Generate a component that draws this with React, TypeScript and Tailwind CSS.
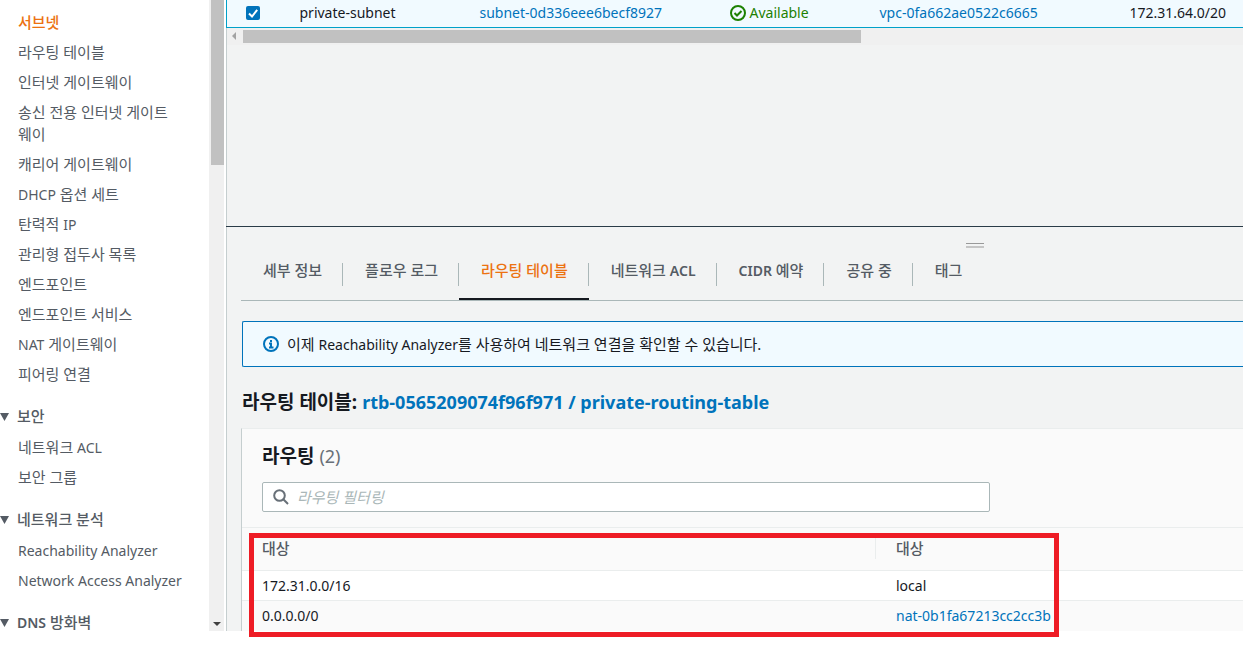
import { useState } from "react";
import clsx from "clsx";

const navGroups = [
  {
    title: "",
    items: [
      "서브넷",
      "라우팅 테이블",
      "인터넷 게이트웨이",
      "송신 전용 인터넷 게이트웨이",
      "캐리어 게이트웨이",
      "DHCP 옵션 세트",
      "탄력적 IP",
      "관리형 접두사 목록",
      "엔드포인트",
      "엔드포인트 서비스",
      "NAT 게이트웨이",
      "피어링 연결",
    ],
  },
  { title: "보안", items: ["네트워크 ACL", "보안 그룹"] },
  { title: "네트워크 분석", items: ["Reachability Analyzer", "Network Access Analyzer"] },
  { title: "DNS 방화벽", items: [] },
];

const tabs = ["세부 정보", "플로우 로그", "라우팅 테이블", "네트워크 ACL", "CIDR 예약", "공유 중", "태그"];

const routes = [
  { destination: "172.31.0.0/16", target: "local", link: false },
  { destination: "0.0.0.0/0", target: "nat-0b1fa67213cc2cc3b", link: true },
];

// Latin runs are set a little smaller than the Hangul around them
function Mixed({ text, bold = false }: { text: string; bold?: boolean }) {
  return (
    <>
      {text.split(/([A-Za-z]+(?: [A-Za-z]+)*)/).map((part, i) =>
        i % 2 ? (
          <span key={i} className={clsx("text-[14px] leading-none whitespace-nowrap", bold && "font-semibold")}>
            {part}
          </span>
        ) : (
          part
        )
      )}
    </>
  );
}

function Sidebar() {
  return (
    <aside className="flex w-[226px] shrink-0 overflow-hidden bg-white text-[#545b64]">
      <nav className="min-w-0 flex-1 pt-[11px] text-[15px] leading-[22px]">
        {navGroups.map((group, g) => (
          <section key={g} className={clsx(g > 0 && "mt-5")}>
            {group.title && (
              <button className="mb-[9px] flex items-center font-medium">
                <svg viewBox="0 0 17 10" className="h-[10px] w-[17px]" fill="currentColor">
                  <path d="M0 2h9L4.500 10z" />
                </svg>
                <span>
                  <Mixed text={group.title} bold />
                </span>
              </button>
            )}
            <ul className="space-y-2 pr-8 pl-[18px]">
              {group.items.map((item) => (
                <li key={item}>
                  <a
                    href="#"
                    className={clsx("block break-all", item === "서브넷" && "font-medium text-[#ec7211]")}
                  >
                    <Mixed text={item} />
                  </a>
                </li>
              ))}
            </ul>
          </section>
        ))}
      </nav>
      {/* Scrollbar */}
      <div className="mr-[2px] flex w-[15px] shrink-0 flex-col items-end justify-between bg-[#f0f0f0]">
        <div className="h-[165px] w-[13px] bg-[#c1c1c1]" />
        <svg viewBox="0 0 15 15" className="size-[15px]" fill="#404040">
          <path d="M4 6h8L8 10z" />
        </svg>
      </div>
    </aside>
  );
}

function SubnetList() {
  return (
    <div className="flex h-[226px] flex-col overflow-hidden">
      <table className="w-full min-w-[1017px] table-fixed border-b border-l border-[#00a1c9] bg-[#f1faff] text-left">
        <tbody>
          <tr className="h-[27px] leading-[26px] whitespace-nowrap">
            <td className="w-[73px] pl-[19px]">
              <label className="flex size-[14px] cursor-pointer">
                <input type="checkbox" defaultChecked aria-label="private-subnet" className="peer sr-only" />
                <svg viewBox="0 0 14 14" className="size-[14px] rounded-[2px] bg-[#0073bb]">
                  <path d="M3 7.500l3 3L11.200 3.800" fill="none" stroke="#fff" strokeWidth="2" />
                </svg>
              </label>
            </td>
            <td className="w-[180px]">private-subnet</td>
            <td className="w-[250px]">
              <a href="#" className="text-[#0073bb]">subnet-0d336eee6becf8927</a>
            </td>
            <td className="w-[150px]">
              <span className="flex items-center gap-1 text-[#1d8102]">
                <svg viewBox="0 0 16 16" className="size-4" fill="none" stroke="currentColor" strokeWidth="2">
                  <circle cx="8" cy="8" r="7" />
                  <path d="M4.500 8l2.500 2.500L11.500 6" />
                </svg>
                Available
              </span>
            </td>
            <td className="w-[250px]">
              <a href="#" className="text-[#0073bb]">vpc-0fa662ae0522c6665</a>
            </td>
            <td>172.31.64.0/20</td>
          </tr>
        </tbody>
      </table>
      <div className="flex-1 border-l border-[#c5cecf]">
        <div className="flex h-[17px] items-center bg-[#f0f0f0]">
          <svg viewBox="0 0 16 16" className="size-4" fill="#a3a3a3">
            <path d="M9 4v8L5 8z" />
          </svg>
          <div className="h-[13px] w-[618px] bg-[#c1c1c1]" />
        </div>
      </div>
    </div>
  );
}

function Tabs() {
  const [active, setActive] = useState("라우팅 테이블");

  return (
    <div role="tablist" className="flex border-b border-[#aab7b8] text-[15px] leading-[22px] font-medium">
      {tabs.map((tab, i) => (
        <button
          key={tab}
          role="tab"
          aria-selected={tab === active}
          onClick={() => setActive(tab)}
          className={clsx(
            "relative pt-[5px] pr-[21px] pb-[19px] pl-[22px] whitespace-nowrap",
            tab === active ? "text-[#ec7211]" : "text-[#545b64]"
          )}
        >
          <Mixed text={tab} bold />
          {i < tabs.length - 1 && <span className="absolute top-[9px] right-0 h-[23px] w-px bg-[#aab7b8]" />}
          {tab === active && <span className="absolute right-0 bottom-0 left-0 h-[2px] bg-[#16191f]" />}
        </button>
      ))}
    </div>
  );
}

function RoutesPanel() {
  return (
    <section className="border-t border-l border-t-[#eaeded] border-l-[#c5cecf] bg-[#fafafa]">
      <div className="px-5 pt-4 pb-[15px]">
        <h2 className="text-[19px] leading-[22px] font-bold">
          라우팅 <span className="text-[18px] leading-none font-normal text-[#687078]">(2)</span>
        </h2>
        <label className="mt-[15px] flex h-[30px] w-[728px] max-w-full items-center rounded-[2px] border border-[#aab7b8] bg-white pl-[10px]">
          <svg viewBox="0 0 16 16" className="size-4 shrink-0" fill="none" stroke="#687078" strokeWidth="2">
            <circle cx="6.500" cy="6.500" r="5.300" />
            <path d="M10.300 10.300L15 15" />
          </svg>
          <input
            type="text"
            aria-label="라우팅 필터링"
            placeholder="라우팅 필터링"
            className="ml-2 w-full bg-transparent text-[15px] italic outline-none placeholder:text-[#aab7b8]"
          />
        </label>
      </div>
      <table className="w-full table-fixed text-left">
        <thead>
          <tr className="h-[43px] border-t border-[#eaeded] align-top text-[15px] leading-[22px] text-[#545b64]">
            <th className="w-[634px] p-0 pt-[9px] font-medium">
              <div className="border-r border-[#eaeded] pl-5">대상</div>
            </th>
            <th className="pt-[9px] pl-5 font-medium">대상</th>
          </tr>
        </thead>
        <tbody>
          {routes.map((route) => (
            <tr key={route.destination} className="h-[30px] border-t border-[#eaeded] odd:bg-white">
              <td className="pl-5">{route.destination}</td>
              <td className="pl-5">
                {route.link ? (
                  <a href="#" className="text-[#0073bb]">{route.target}</a>
                ) : (
                  route.target
                )}
              </td>
            </tr>
          ))}
        </tbody>
      </table>
    </section>
  );
}

export default function App() {
  return (
    <div className="relative h-screen overflow-hidden bg-white pb-[15px] font-['Noto_Sans','Noto_Sans_CJK_KR',sans-serif] text-[14px] text-[#16191f]">
      <div className="flex h-full">
        <Sidebar />
        <main className="min-w-0 flex-1 overflow-hidden bg-[#f2f3f3]">
          <SubnetList />
          <div className="border-t border-[#2a3b47]">
            <div className="border-l border-[#c5cecf] pl-[14px]">
              {/* Resize handle */}
              <div className="flex h-[27px] items-start pt-4 pl-[725px]">
                <div className="h-[5px] w-[18px] shrink-0 border-t border-b-2 border-t-[#999] border-b-[#c5c5c5]" />
              </div>
              <Tabs />
              <div className="mt-5 ml-px flex h-[46px] items-center gap-2 rounded-l-[2px] border border-r-0 border-[#0073bb] bg-[#f1faff] pl-5 text-[15px] leading-[22px]">
                <svg viewBox="0 0 16 16" className="size-4" fill="none" stroke="#0073bb" strokeWidth="2">
                  <circle cx="8" cy="8" r="7" />
                  <path d="M8 4v2M6 7.500h2V11M6 11.500h4.500" />
                </svg>
                <p>
                  <Mixed text="이제 Reachability Analyzer를 사용하여 네트워크 연결을 확인할 수 있습니다." />
                </p>
              </div>
              <h1 className="mt-6 mb-[15px] ml-px text-[19px] leading-[22px] font-bold">
                라우팅 테이블:{" "}
                <a href="#" className="text-[18px] leading-none text-[#0073bb]">
                  rtb-0565209074f96f971 / private-routing-table
                </a>
              </h1>
              <RoutesPanel />
            </div>
          </div>
        </main>
      </div>
      {/* Highlight around the route table */}
      <div className="pointer-events-none absolute top-[533px] left-[249px] h-[104px] w-[810px] border-5 border-[#ee1c25]" />
    </div>
  );
}
